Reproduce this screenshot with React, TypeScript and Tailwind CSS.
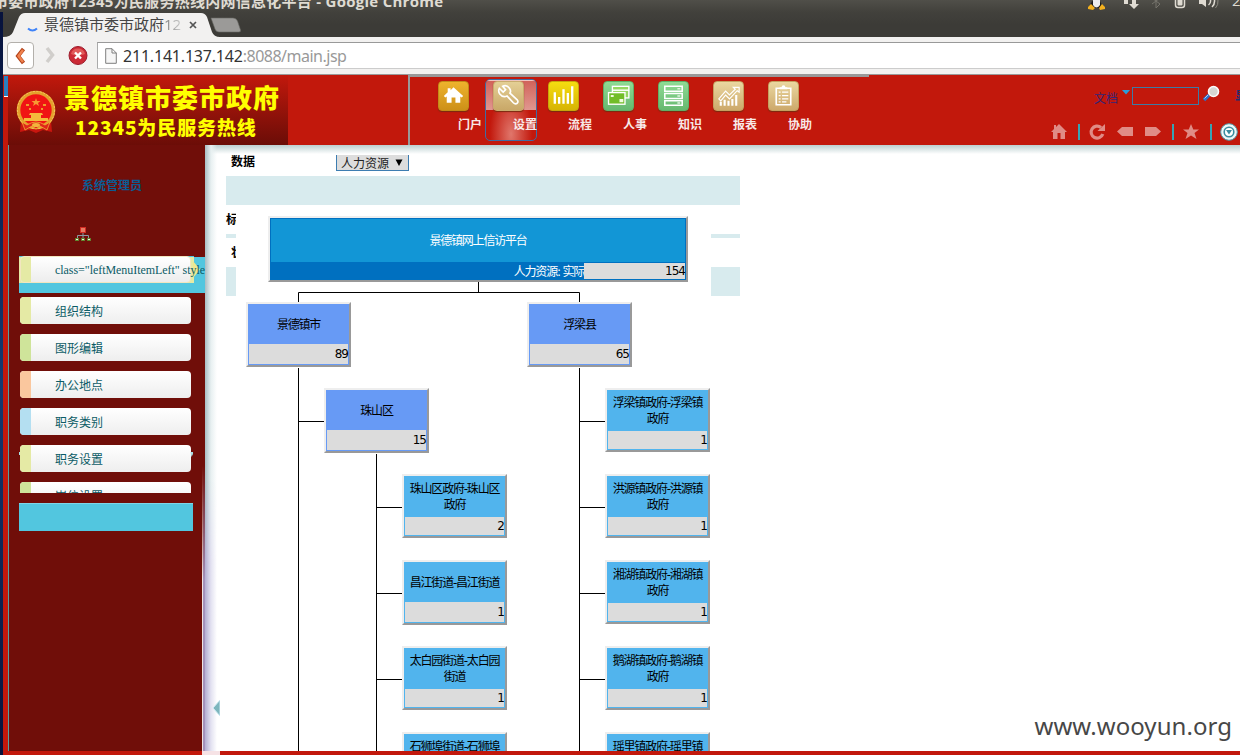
import React from "react";

const CJK = "font-['Noto_Sans_CJK_SC',sans-serif]";

/* ---------- Org chart ---------- */

type Kind = "root" | "district" | "office";
interface OrgNode {
  name: string;
  count: number;
  x: number;
  y: number;
  kind: Kind;
  tall?: boolean;
}

const nodes: OrgNode[] = [
  { name: "景德镇市", count: 89, x: 10, y: 96, kind: "district", tall: true },
  { name: "浮梁县", count: 65, x: 291, y: 96, kind: "district", tall: true },
  { name: "珠山区", count: 15, x: 88, y: 182, kind: "district", tall: true },
  { name: "珠山区政府-珠山区政府", count: 2, x: 166, y: 268, kind: "office" },
  { name: "昌江街道-昌江街道", count: 1, x: 166, y: 354, kind: "office", tall: true },
  { name: "太白园街道-太白园街道", count: 1, x: 166, y: 440, kind: "office" },
  { name: "石狮埠街道-石狮埠街道", count: 1, x: 166, y: 526, kind: "office" },
  { name: "浮梁镇政府-浮梁镇政府", count: 1, x: 369, y: 182, kind: "office" },
  { name: "洪源镇政府-洪源镇政府", count: 1, x: 369, y: 268, kind: "office" },
  { name: "湘湖镇政府-湘湖镇政府", count: 1, x: 369, y: 354, kind: "office" },
  { name: "鹅湖镇政府-鹅湖镇政府", count: 1, x: 369, y: 440, kind: "office" },
  { name: "瑶里镇政府-瑶里镇政府", count: 1, x: 369, y: 526, kind: "office" },
];

const NODE_TEXT =
  "font-['DejaVu_Sans','Noto_Sans_CJK_SC',sans-serif] text-[12px] tracking-[-1.2px]";
const COUNT_TEXT = "font-['DejaVu_Sans',sans-serif] text-[12px] tracking-[-1px]";

function NodeBox({ node }: { node: OrgNode }) {
  const fill = node.kind === "district" ? "bg-[#679af5]" : "bg-[#51b4ed]";
  return (
    <div
      className="absolute flex w-[105px] flex-col border-2 border-t-[#eeeeee] border-r-[#999999] border-b-[#999999] border-l-[#eeeeee]"
      style={{ left: node.x, top: node.y }}
    >
      <div className={`flex flex-col px-px pb-px ${fill}`}>
        <div
          className={`flex items-center justify-center px-[3px] text-center leading-4 text-black ${NODE_TEXT} ${
            node.tall ? "h-10 pt-[2px]" : "h-[41px] pt-px"
          }`}
        >
          <span className="w-[94px]">{node.name}</span>
        </div>
        <div
          className={`flex justify-end bg-[#dcdcdc] text-black ${COUNT_TEXT} ${
            node.tall ? "h-5 leading-[20px]" : "h-[18px] leading-[18px]"
          }`}
        >
          <span>{node.count}</span>
        </div>
      </div>
    </div>
  );
}

function OrgChart() {
  return (
    <div className="absolute top-[61px] left-[31px] h-[545px] w-[475px] overflow-hidden bg-white">
      <svg className="absolute inset-0" width="475" height="545" fill="none" stroke="#000" strokeWidth="1">
        <path d="M242.500 76V86.500M62.500 96V86.500H343.500V96M62.500 162V545M343.500 162V545M62 215.500H88M343 215.500H369M140.500 248V545M140 301.500H166M140 387.500H166M140 473.500H166M343 301.500H369M343 387.500H369M343 473.500H369" />
      </svg>
      <div className="absolute top-[10px] left-[32px] flex h-[66px] w-[420px] flex-col border-2 border-t-[#eeeeee] border-r-[#999999] border-b-[#999999] border-l-[#eeeeee]">
        <div className="flex h-full flex-col border border-[#0070c0] bg-[#0070c0]">
          <div className={`flex h-[43px] items-center justify-center bg-[#1296d6] pt-px text-white ${NODE_TEXT}`}>
            景德镇网上信访平台
          </div>
          <div className="mt-px flex h-4 leading-4">
            <span className={`flex-1 pt-px text-right text-white ${NODE_TEXT}`}>人力资源: 实际</span>
            <span className={`w-[101px] bg-[#dcdcdc] text-right text-black ${COUNT_TEXT}`}>154</span>
          </div>
        </div>
      </div>
      {nodes.map((n) => (
        <NodeBox key={`${n.x}-${n.y}`} node={n} />
      ))}
    </div>
  );
}

/* ---------- Browser chrome ---------- */

function TrayIcons() {
  return (
    <svg width="152" height="12" viewBox="0 0 152 12">
      <path d="M6 6Q7 0 12 0Q17 0 18 6V8H6Z" fill="#1c1c1c" />
      <path d="M9 0H16V5Q12.500 10 9 5Z" fill="#eee" />
      <path d="M4 7L7 4L11 8L9 10L4 9ZM15 8L18 4L21 7V9L16 10Z" fill="#f2b01e" />
      <path d="M40 0H44V4H40ZM48 0H52V4H55L50 9L45 4H48Z" fill="#dfdbd2" />
      <path d="M68 4L76 -2M72 0V8L76 4L68 -2" stroke="#77756d" fill="none" />
      <path d="M91.500 0V5Q91.500 7.500 94 7.500H98Q100.500 7.500 100.500 5V0" stroke="#dfdbd2" strokeWidth="1.500" fill="none" />
      <path d="M93.500 0H98.500V4.500Q98.500 5.500 97.500 5.500H94.500Q93.500 5.500 93.500 4.500Z" fill="#dfdbd2" />
      <path d="M115 0H122V7L118 4H115Z" fill="#dfdbd2" />
      <path d="M124.500 5Q127 3 126.500 0M128 7Q131 4 130.500 0" stroke="#dfdbd2" fill="none" strokeWidth="1.500" />
      <path d="M131.500 8Q134.500 5 134 0" stroke="#8a887f" fill="none" />
    </svg>
  );
}

function TopPanel() {
  return (
    <div className="flex h-3 shrink-0 justify-between overflow-hidden bg-linear-to-b from-[#504f49] to-[#42413c]">
      <span
        className="-mt-[9px] -ml-[7px] h-5 text-[15px] leading-5 font-bold tracking-[0.27px] whitespace-nowrap text-[#dfdbd2] font-['Open_Sans','Noto_Sans_CJK_SC',sans-serif]"
      >
        市委市政府12345为民服务热线内网信息化平台 - Google Chrome
      </span>
      <span className="flex">
        <TrayIcons />
        <span className="-mt-[10px] -ml-1 w-2 overflow-hidden text-[15px] leading-5 text-[#dfdbd2] font-['Open_Sans',sans-serif]">2</span>
      </span>
    </div>
  );
}

function TabStrip() {
  return (
    <div className="relative flex h-[25px] shrink-0 bg-linear-to-b from-[#42413c] via-[#3c3b37] to-[#3c3b37]">
      <svg className="absolute inset-0" width="250" height="25">
        <path d="M0 25Q8 25 10 20L16 5Q18 1 22 1H198Q202 1 204 5L209 20Q211 25 217 25Z" fill="#f2f1f0" />
        <path d="M208 6H230Q233 6 234.500 9L237.500 18Q238 20 236 20H216Q213 20 212 17Z" fill="#9b9a98" stroke="#6a6965" strokeWidth="0.600" />
        <path d="M25 16.500Q29.500 20.500 34 16.500" stroke="#3f83f8" strokeWidth="2" fill="none" />
        <path d="M187 10L193 16M193 10L187 16" stroke="#555" strokeWidth="1.700" />
      </svg>
      <span className="relative ml-[41px] flex h-[25px] w-[140px] items-center overflow-hidden text-[15px] whitespace-nowrap text-[#454545] font-['Open_Sans','Noto_Sans_CJK_SC',sans-serif]">
        景德镇市委市政府<span className="bg-linear-to-r from-[#777] to-[#ccc] bg-clip-text text-transparent">12</span>
      </span>
    </div>
  );
}

function Toolbar() {
  return (
    <div className="flex h-[38px] shrink-0 items-start border-b border-[#999] bg-[#f2f1f0] pt-[5px]">
      <div className="ml-1 flex h-[27px] w-[27px] items-center justify-center rounded border border-[#b3b0ab] bg-white">
        <svg width="13" height="18" viewBox="0 0 13 18">
          <path d="M9.500 2L4 9L9.500 16" fill="none" stroke="#b4441b" strokeWidth="4" />
          <path d="M9 3L4.500 9L9 15" fill="none" stroke="#f0824e" strokeWidth="2.400" />
        </svg>
      </div>
      <svg className="mt-1 ml-2.5" width="14" height="19" viewBox="0 0 14 19">
        <path d="M3 2L8.500 9L3 16" fill="none" stroke="#d0cecb" strokeWidth="3.500" />
      </svg>
      <svg className="mt-1 ml-[10px]" width="20" height="20" viewBox="0 0 20 20">
        <circle cx="10" cy="9.500" r="9" fill="#cc2a36" stroke="#9b1b2b" />
        <path d="M3 8A7.200 7.200 0 0 1 17 8Q10 11 3 8Z" fill="#e15a5a" />
        <path d="M7 6.500L13 12.500M13 6.500L7 12.500" stroke="#fff" strokeWidth="2.400" />
      </svg>
      <div className="ml-[9px] flex h-[27px] flex-1 items-center border border-r-0 border-t-[#999] border-b-[#ccc] border-l-[#aaa] bg-white">
        <svg className="ml-[7px]" width="12" height="16" viewBox="0 0 12 16">
          <path d="M0.700 0.700H7L11.300 5V15.300H0.700ZM7 0.700V5H11.300" fill="#f6f6f6" stroke="#7f7f7f" />
        </svg>
        <span className="ml-[6px] text-[16px] text-[#999] font-['Noto_Sans',sans-serif]">
          <span className="tracking-[-0.2px] text-[#333]">211.141.137.142</span>
          <span className="tracking-[-0.5px]">:8088/main.jsp</span>
        </span>
      </div>
    </div>
  );
}

/* ---------- Application header ---------- */

function Emblem() {
  return (
    <svg width="42" height="46" viewBox="0 0 42 46">
      <path d="M6 32L5 43L14 41L21 44L28 41L37 43L36 32Z" fill="#c9160f" />
      <circle cx="21" cy="21" r="17.500" fill="#f01414" stroke="#e5a02c" strokeWidth="3.600" />
      <circle cx="21" cy="21" r="18.600" fill="none" stroke="#f6cc67" strokeWidth="0.900" strokeDasharray="2 1.500" />
      <path d="M21 9L22 12H25.500L23 14L24 17L21 15L18 17L19 14L16.500 12H20Z" fill="#f79a33" />
      <path d="M11 15H14V17H11ZM28 15H31V17H28ZM14 19H16V21H14ZM26 19H28V21H26Z" fill="#ef9b2a" />
      <path d="M15 24H27L28 26H26V29H33V32H9V29H16V26H14Z" fill="#f5b93c" />
      <path d="M12 36Q21 30 30 36L35 33L32 41L25 37L21 40L17 37L10 41L7 33Z" fill="#e0261a" stroke="#f1ad35" strokeWidth="0.800" />
      <ellipse cx="21" cy="36" rx="4" ry="2" fill="#f3b43c" />
    </svg>
  );
}

function Logo() {
  return (
    <div className="flex h-[70px] w-[280px] bg-linear-to-b from-[#c2180c] to-[#6b0d07]">
      <div className="mt-[14px] ml-[7px] h-[46px] w-[42px]">
        <Emblem />
      </div>
      <div className={`ml-[7px] flex flex-col font-black whitespace-nowrap text-[#ffff00] ${CJK}`}>
        <span className="mt-[7px] h-[30px] text-[26px] leading-[30px] tracking-[1px]">景德镇市委市政府</span>
        <span className="mt-[3px] ml-[11px] h-6 text-[19px] leading-6 tracking-[0.9px]">12345为民服务热线</span>
      </div>
    </div>
  );
}

const navItems = [
  { label: "门户", box: "from-[#eeb32c] to-[#cd9018] border-[#c28b18]", icon: "home" },
  { label: "设置", box: "from-[#e4cf95] to-[#c9a868] border-[#c9ac6d]", icon: "wrench" },
  { label: "流程", box: "from-[#f5dc10] to-[#d7b404] border-[#c7a60b]", icon: "bars" },
  { label: "人事", box: "from-[#8fdb94] to-[#66b86f] border-[#5fb068]", icon: "cards" },
  { label: "知识", box: "from-[#8fdb94] to-[#66b86f] border-[#5fb068]", icon: "server" },
  { label: "报表", box: "from-[#ead7a0] to-[#cda96b] border-[#c4a060]", icon: "trend" },
  { label: "协助", box: "from-[#ead7a0] to-[#cda96b] border-[#c4a060]", icon: "clip" },
];

function NavIcon({ name }: { name: string }) {
  return (
    <svg width="30" height="30" viewBox="0 0 30 30" fill="none">
      {name === "home" && (
        <path d="M15 6L25 15L23.500 16.500L22 15.500V22H17V16.500H13V22H8V15.500L6.500 16.500L5 15L9 11V7H12V9Z" fill="#fff" />
      )}
      {name === "wrench" && (
        <path d="M9 5Q13 3 16 7Q18 10 16.500 12L24 19Q25.500 21 24 22.500Q22 24 20 22L13.500 15Q9 17 6 13Q4 10 5.500 7L9.500 11L12 8.500Z" stroke="#fff" strokeWidth="1.700" />
      )}
      {name === "bars" && (
        <path d="M6 23V11M10.500 23V16M15 23V8M19.500 23V12M24 23V5" stroke="#fff" strokeWidth="2.400" />
      )}
      {name === "cards" && (
        <>
          <rect x="8.700" y="5" width="17" height="12" fill="#95d861" stroke="#fff" strokeWidth="1.400" />
          <path d="M9 9H26" stroke="#fff" strokeWidth="1.500" />
          <rect x="4.700" y="11.500" width="17" height="12" fill="#72bd28" stroke="#fff" strokeWidth="1.400" />
          <path d="M16 18H20V21.500H16ZM7 14H10V16H7Z" fill="#f0fae0" />
        </>
      )}
      {name === "server" && (
        <>
          <path d="M6 5H24V10H6ZM6 12.500H24V17.500H6ZM6 20H24V24.500H6Z" stroke="#fff" strokeWidth="1.600" />
          <path d="M19 7.500H22M19 15H22M19 22.200H22" stroke="#e0f3df" strokeWidth="1.400" />
        </>
      )}
      {name === "trend" && (
        <>
          <path d="M5 18L12 10L16 14L22 8L20 6H26V11L24 9.500L16 18L12 14L7 20Z" stroke="#fff" strokeWidth="1.200" />
          <path d="M7 25V21M11 25V19M15 25V20M19 25V18M23 25V14" stroke="#fff" strokeWidth="2.200" />
        </>
      )}
      {name === "clip" && (
        <>
          <path d="M7.500 7H22.500V24H7.500Z" stroke="#fff" strokeWidth="1.700" />
          <path d="M11 8V6H13Q13 4 15 4T17 6H19V8Z" fill="#fff" />
          <path d="M10 11H12M13.500 11H20M10 14.500H12M13.500 14.500H20M10 18H12M13.500 18H20M10 21H12M13.500 21H18" stroke="#fff" strokeWidth="1.300" />
        </>
      )}
    </svg>
  );
}

function Nav() {
  return (
    <nav className="flex h-full w-[461px] border-t-2 border-l-2 border-[#999] pt-1 pl-7">
      {navItems.map((item, i) => (
        <div key={item.label} className="relative flex w-[55px] shrink-0 flex-col">
          {i === 1 && (
            <div className="absolute top-[-2px] left-[-8px] flex h-[62px] w-[52px] flex-col overflow-hidden rounded-[5px] border border-[#3f6ca3] bg-radial-[at_50%_90%] from-[#e0766b] to-[#c2180c] to-60%">
              <div className="h-[30px] border-t border-[#eec4c0] bg-linear-to-b from-[#d1625a] to-[#e09790]" />
            </div>
          )}
          <div className={`relative flex h-[30px] w-[31px] items-center justify-center rounded-[4px] border bg-linear-to-b shadow-[0_1px_1px_#7a2a10] ${item.box}`}>
            <NavIcon name={item.icon} />
          </div>
          <span className={`relative ml-5 mt-[5px] text-[12px] leading-4 font-bold text-[#f8e9e8] ${CJK}`}>{item.label}</span>
        </div>
      ))}
    </nav>
  );
}

function HeaderTools() {
  return (
    <div className="ml-auto flex w-[200px] shrink-0 flex-col">
      <div className="flex h-[35px] items-start pl-[54px]">
        <span className={`mt-[15px] w-6 text-[12px] leading-4 text-[#342575] ${CJK}`}>文档</span>
        <svg className="mt-[15px] ml-1" width="8" height="5">
          <path d="M0 0H8L4 4.500Z" fill="#2a9cdb" />
        </svg>
        <div className="mt-3 ml-[2px] h-[18px] w-[67px] border border-[#3b7ba6]" />
        <svg className="mt-[10px] ml-1" width="17" height="18" viewBox="0 0 17 18">
          <path d="M1 15L6 10" stroke="#2e70cc" strokeWidth="3.400" />
          <path d="M1.500 13.500L5 10" stroke="#acd3f5" strokeWidth="1" />
          <circle cx="10.500" cy="6.500" r="5" fill="#d6d6d2" stroke="#fafafa" strokeWidth="1.600" />
        </svg>
        <span className={`mt-3 ml-[15px] w-[5px] overflow-hidden text-[12px] leading-4 font-bold text-[#232b6b] ${CJK}`}>显</span>
      </div>
      <svg className="mt-[13px]" width="200" height="20" viewBox="0 0 200 20" fill="#e08c86">
        <path d="M19 1L27 9H25V16H20.500V10H17.500V16H13V9H11L14 6V2H16V4Z" />
        <path d="M61 4.500A6 6 0 1 0 62.800 11" fill="none" stroke="#e08c86" strokeWidth="3.200" />
        <path d="M65 1V8H57.500Z" />
        <path d="M77 8.500L82 4H93V13H82ZM105 4H116L121 8.500L116 13H105Z" />
        <path d="M151 1L153.300 6.500H159L154.500 10L156.500 16L151 12.500L145.500 16L147.500 10L143 6.500H148.700Z" />
        <path d="M38 1H40V17H38ZM132 1H134V17H132ZM170 1H172V17H170Z" fill="#36a4b5" />
        <circle cx="189" cy="9" r="8.300" fill="#edf7f9" stroke="#519cab" strokeWidth="1" />
        <circle cx="189" cy="9" r="4.800" fill="#fff" stroke="#3a8c9f" strokeWidth="1.600" />
        <path d="M186 7H192L189 11.500Z" fill="#3a8c9f" />
      </svg>
    </div>
  );
}

/* ---------- Sidebar ---------- */

const menu = [
  { label: "组织结构", color: "bg-[#e5eaa5]" },
  { label: "图形编辑", color: "bg-[#cfe49a]" },
  { label: "办公地点", color: "bg-[#fac79e]" },
  { label: "职务类别", color: "bg-[#b4dff1]" },
  { label: "职务设置", color: "bg-[#e5eaa5]" },
  { label: "岗位设置", color: "bg-[#cfe49a]" },
];

function MenuButton({ label, color }: { label: string; color: string }) {
  return (
    <div className="flex h-[27px] w-[171px] shrink-0 overflow-hidden rounded-[4px] bg-linear-to-b from-white to-[#eeeeee]">
      <span className={`w-[11px] ${color}`} />
      <span className={`ml-6 text-[12px] leading-[27px] text-[#0c5c66] ${CJK}`}>{label}</span>
    </div>
  );
}

function Sidebar() {
  return (
    <aside className="relative flex w-[197px] shrink-0 flex-col overflow-hidden border-l border-[#5a9d9f] bg-[#700e09]">
      <span className={`mt-8 ml-[73px] text-[12px] leading-4 font-bold text-[#0b5c94] ${CJK}`}>系统管理员</span>
      <svg className="mt-[33px] ml-[65px] shrink-0" width="18" height="17" viewBox="0 0 18 17">
        <path d="M3.500 12V9.500H14.500V12M9 6V12" stroke="#8b9aa3" fill="none" />
        <rect x="6.500" y="1.500" width="5" height="5" fill="#e67b64" stroke="#d42b22" />
        <path d="M1.500 12.500H4.500V14.500H1.500ZM7.500 12.500H10.500V14.500H7.500ZM13.500 12.500H16.500V14.500H13.500Z" fill="#f2f5da" stroke="#5c8a2d" />
      </svg>
      <div className="mt-[13px] ml-[10px] h-[37px] bg-[#52c6df]">
        <div className="relative h-[27px] w-[186px]">
          <svg className="absolute inset-0" width="186" height="28">
            <path d="M0 1H175V27H0Z" fill="#e5eaa5" />
            <path d="M174 5L181 13.500L174 22Z" fill="#eee88f" />
            <path d="M175 0H186V1H175Z" fill="#700e09" />
          </svg>
          <div className="absolute top-0 left-px flex h-[27px] w-[171px] rounded-[4px] border border-[#f2e6c0] bg-linear-to-b from-white to-[#ededed]">
            <span className="w-[10px] shrink-0 rounded-l-[3px] bg-[#e5eaa5]" />
            <span className="ml-6 text-[12px] leading-[26px] tracking-[-0.05px] whitespace-nowrap text-[#0c5c66] font-['Liberation_Serif',serif]">
              class="leftMenuItemLeft" style
            </span>
          </div>
        </div>
      </div>
      <div className="mt-1 ml-[11px] flex h-[196px] shrink-0 flex-col gap-[10px] overflow-hidden">
        {menu.map((m) => (
          <MenuButton key={m.label} {...m} />
        ))}
      </div>
      <div className="mt-[10px] ml-[10px] h-7 w-[174px] shrink-0 border-t border-[#7ed6e8] bg-[#52c6df]" />
      <svg className="absolute top-[307px] left-[10px]" width="175" height="6">
        <path d="M0 0H1V3H0ZM171.500 0H174V2L172.500 5Z" fill="#a9dfe4" />
      </svg>
      <div className="absolute top-[320px] right-0 bottom-0 w-[3px] border-l border-[#efe4e4] bg-[#a491bb] mask-t-from-60%" />
    </aside>
  );
}

/* ---------- Content ---------- */

function Content() {
  const label = `text-[12px] leading-4 font-bold text-black ${CJK}`;
  return (
    <main className="relative flex-1 overflow-hidden bg-white">
      <div className="absolute inset-x-0 top-0 h-[9px] bg-linear-to-b from-[#bccfd0] to-white" />
      <div className="absolute inset-y-0 left-0 w-3 bg-linear-to-r from-[#a9bdc3] via-[#e8f0f1] via-50% to-transparent" />
      <div className="absolute top-[335px] bottom-0 left-0 w-3 bg-linear-to-r from-[#b4aed2] via-[#e3e2f1] via-50% to-white mask-t-from-70%" />
      <div className="relative ml-[21px] flex w-[514px] flex-col">
        <div className="flex h-[31px] items-start pt-[9px]">
          <span className={`-mt-px ml-[5px] w-[105px] ${label}`}>数据</span>
          <div className={`mt-px flex h-4 w-[73px] items-center justify-between border border-t-0 border-[#3d7db1] bg-[#dddddd] pr-1 pl-1 text-[12px] leading-4 text-[#222] ${CJK}`}>
            人力资源
            <svg width="9" height="8">
              <path d="M0.500 0.500H7.500L4 7Z" fill="#000" />
            </svg>
          </div>
        </div>
        <div className="h-[29px] bg-[#d8ebee]" />
        <span className={`mt-1.5 ${label}`}>标题</span>
        <div className="mt-[7px] h-1 bg-[#d8ebee]" />
        <span className={`mt-1.5 ml-[5px] ${label}`}>状态</span>
        <div className="mt-[7px] h-[29px] bg-[#d8ebee]" />
      </div>
      <OrgChart />
      <svg className="absolute top-[554px] left-[7px]" width="8" height="18">
        <path d="M8 1L1 9L8 17Z" fill="#7db6bd" stroke="#cfe9f2" />
      </svg>
      <span className="absolute right-[8px] bottom-[9px] text-[24px] leading-8 tracking-[0.05px] text-[#474747] font-['Noto_Sans',sans-serif]">
        www.wooyun.org
      </span>
    </main>
  );
}

export default function App() {
  return (
    <div className="flex h-[755px] w-[1240px] flex-col overflow-hidden bg-white">
      <TopPanel />
      <div className="flex min-h-0 flex-1">
        <div className="w-[3px] shrink-0 bg-linear-to-b from-[#07123c] via-[#123a72] to-[#07123c]" />
        <div className="flex min-w-0 flex-1 flex-col">
          <TabStrip />
          <Toolbar />
          <div className="flex min-h-0 flex-1">
            <div className="w-[5px] shrink-0 bg-[#c2180c]">
              <div className="mt-px ml-px h-[21px] border-b border-white bg-[#2c7fc0]" />
            </div>
            <div className="flex min-w-0 flex-1 flex-col">
              <header className="flex h-[70px] shrink-0 bg-[#c2180c]">
                <Logo />
                <div className="w-[120px] shrink-0" />
                <Nav />
                <HeaderTools />
              </header>
              <div className="flex min-h-0 flex-1">
                <Sidebar />
                <Content />
              </div>
              <footer className="flex h-1 shrink-0 bg-[#c2180c]">
                <div className="ml-[194px] w-[18px] bg-[#f6e2e5]" />
              </footer>
            </div>
          </div>
        </div>
      </div>
    </div>
  );
}
